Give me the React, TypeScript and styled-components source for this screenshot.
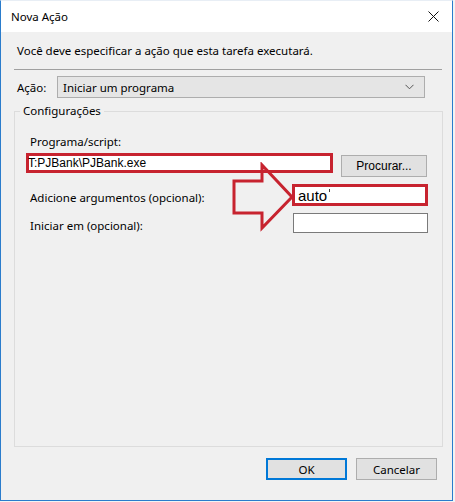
import styled, { createGlobalStyle } from "styled-components";

const GlobalStyle = createGlobalStyle`
  body {
    margin: 0;
    background: #f3f3f3;
    font-family: "Noto Sans", "Open Sans", sans-serif;
    font-size: 11.5px;
    color: #000;
  }
`;

const Window = styled.div`
  position: relative;
  width: 453px;
  height: 501px;
  box-sizing: border-box;
  border: 1px solid #2a7ccc;
  border-top-color: #e8eef5;
  display: flex;
  flex-flow: column;
  background: #f0f0f0;
`;

const TitleBar = styled.div`
  height: 31px;
  display: flex;
  align-items: center;
  justify-content: space-between;
  padding: 0 9px 0 10px;
  background: white;
`;

const Title = styled.span`
  font-size: 11.5px;
`;

const CloseIcon = styled.svg`
  width: 11px;
  height: 11px;
  margin-right: 4px;
`;

const Body = styled.div`
  flex: 1;
  padding: 11px 9px 0 13px;
  display: flex;
  flex-flow: column;
`;

const Text = styled.div`
  line-height: 16px;
  margin-left: 3px;
  white-space: nowrap;
`;

const Separator = styled.div`
  margin-top: 10px;
  height: 1px;
  width: 428px;
  background: #a0a0a0;
`;

const ActionRow = styled.div`
  margin-top: 6px;
  display: flex;
  align-items: center;
`;

const ActionLabel = styled.span`
  width: 40px;
  margin-left: 3px;
`;

const Select = styled.div`
  box-sizing: border-box;
  width: 368px;
  height: 22px;
  padding: 0 10px 0 5px;
  display: flex;
  align-items: center;
  justify-content: space-between;
  background: #e5e5e5;
  border: 1px solid #adadad;
`;

const Chevron = styled.svg`
  width: 9px;
  height: 6px;
`;

const Group = styled.fieldset`
  box-sizing: border-box;
  margin: 5px 0 0 0;
  padding: 0;
  width: 429px;
  height: 344px;
  border: 1px solid #dcdcdc;
  min-inline-size: 0;
`;

const Legend = styled.legend`
  margin-left: 5px;
  padding: 0 3px;
  line-height: 16px;
`;

const GroupContent = styled.div`
  padding: 15px 14px 0 11px;
`;

const FieldLabel = styled.div`
  line-height: 16px;
  padding-left: 4px;
`;

const ProgramRow = styled.div`
  margin-top: 3px;
  display: flex;
  align-items: flex-start;
`;

const TextBox = styled.div<{ $width: number; $height: number; $marked?: boolean }>`
  box-sizing: border-box;
  width: ${(p) => p.$width}px;
  height: ${(p) => p.$height}px;
  background: white;
  border: ${(p) => (p.$marked ? "3px solid #c7232f" : "1px solid #7a7a7a")};
  display: flex;
  align-items: center;
  font-family: "Liberation Sans", Arial, sans-serif;
  white-space: nowrap;
`;

const ProgramValue = styled.span`
  font-size: 12px;
  margin-left: -1px;
`;

const ArgValue = styled.span`
  font-size: 15px;
  margin-left: 3px;
`;

const Caret = styled.span`
  align-self: flex-start;
  margin: 2px 0 0 2px;
  width: 1px;
  height: 3px;
  background: #444;
`;

const BrowseButton = styled.button`
  box-sizing: border-box;
  margin: 2px 0 0 8px;
  width: 86px;
  height: 22px;
  padding: 0;
  background: #e1e1e1;
  border: 1px solid #adadad;
  font-family: "Liberation Sans", Arial, sans-serif;
  font-size: 12px;
  color: #000;
`;

const FieldRow = styled.div<{ $gap: number }>`
  margin-top: ${(p) => p.$gap}px;
  display: flex;
  align-items: center;
`;

const RowLabel = styled(FieldLabel)<{ $width: number }>`
  width: ${(p) => p.$width}px;
  box-sizing: border-box;
  padding-top: 6px;
`;

const ButtonRow = styled.div`
  margin-top: 11px;
  padding-right: 6px;
  display: flex;
  justify-content: flex-end;
  gap: 9px;
`;

const DialogButton = styled.button<{ $primary?: boolean }>`
  box-sizing: border-box;
  width: 81px;
  height: 22px;
  padding: 0;
  background: #e1e1e1;
  border: ${(p) => (p.$primary ? "2px solid #0078d7" : "1px solid #adadad")};
  font-family: "Noto Sans", "Open Sans", sans-serif;
  font-size: 11.5px;
  color: #000;
`;

const Arrow = styled.svg`
  position: absolute;
  left: 230px;
  top: 161px;
  width: 64px;
  height: 70px;
  pointer-events: none;
`;

export default function App() {
  return (
    <>
      <GlobalStyle />
      <Window>
        <TitleBar>
          <Title>Nova Ação</Title>
          <CloseIcon viewBox="0 0 11 11">
            <path d="M0.5 0.5 L10.5 10.5 M10.5 0.5 L0.5 10.5" stroke="#111" strokeWidth="1" />
          </CloseIcon>
        </TitleBar>
        <Body>
          <Text>Você deve especificar a ação que esta tarefa executará.</Text>
          <Separator />
          <ActionRow>
            <ActionLabel>Ação:</ActionLabel>
            <Select>
              <span>Iniciar um programa</span>
              <Chevron viewBox="0 0 9 6">
                <polyline points="0.5,0.8 4.5,4.8 8.5,0.8" fill="none" stroke="#555" strokeWidth="1" />
              </Chevron>
            </Select>
          </ActionRow>
          <Group>
            <Legend>Configurações</Legend>
            <GroupContent>
              <FieldLabel>Programa/script:</FieldLabel>
              <ProgramRow>
                <TextBox $width={307} $height={20} $marked>
                  <ProgramValue>T:PJBank\PJBank.exe</ProgramValue>
                </TextBox>
                <BrowseButton>Procurar...</BrowseButton>
              </ProgramRow>
              <FieldRow $gap={7}>
                <RowLabel $width={266}>Adicione argumentos (opcional):</RowLabel>
                <TextBox $width={136} $height={22} $marked>
                  <ArgValue>auto</ArgValue>
                  <Caret />
                </TextBox>
              </FieldRow>
              <FieldRow $gap={6}>
                <RowLabel $width={267}>Iniciar em (opcional):</RowLabel>
                <TextBox $width={135} $height={20} />
              </FieldRow>
            </GroupContent>
          </Group>
          <ButtonRow>
            <DialogButton $primary>OK</DialogButton>
            <DialogButton>Cancelar</DialogButton>
          </ButtonRow>
        </Body>
        <Arrow viewBox="0 0 64 70">
          <polygon
            points="3,19 31,19 31,3 61,35 31,66 31,51 3,51"
            fill="none"
            stroke="#c7232f"
            strokeWidth="3"
          />
        </Arrow>
      </Window>
    </>
  );
}
